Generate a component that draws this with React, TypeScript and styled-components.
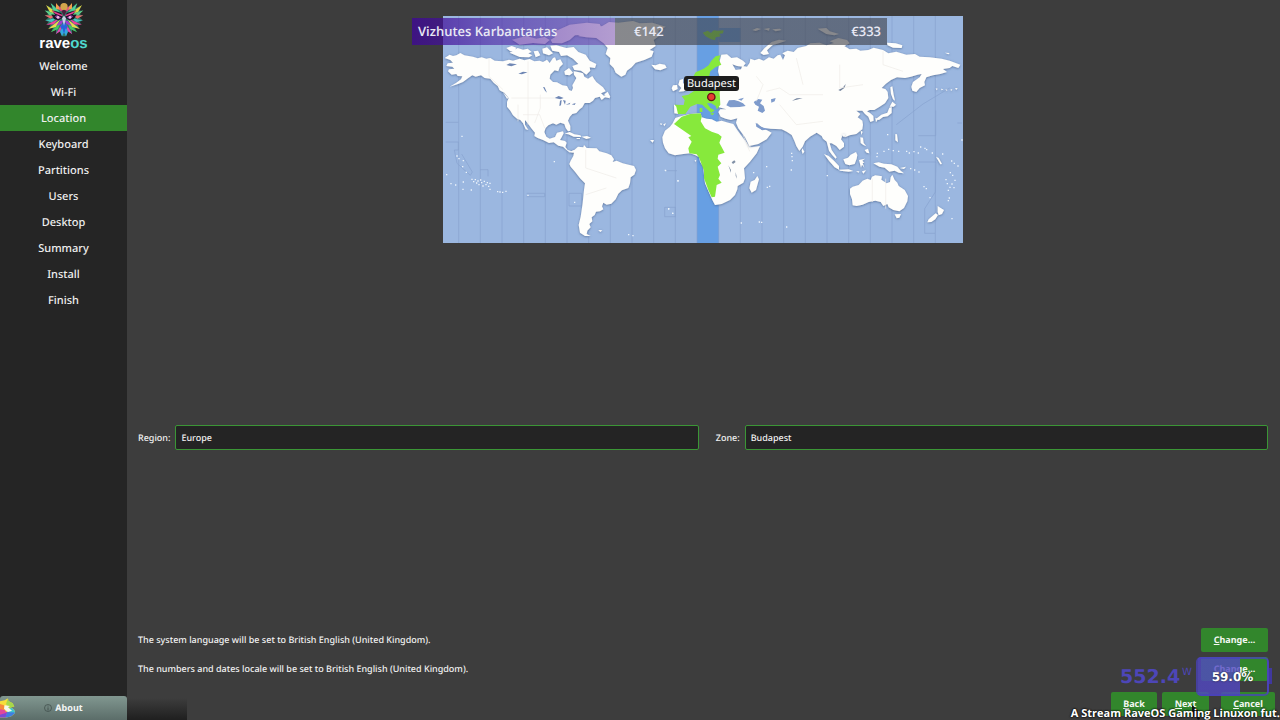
import React, { useState } from "react";
import styled, { createGlobalStyle } from "styled-components";

const GlobalStyle = createGlobalStyle`
  *, *::before, *::after { box-sizing: border-box; }
  body {
    margin: 0;
    background: #3d3d3d;
    color: #f2f2f2;
    font-family: "Noto Sans", "Open Sans", sans-serif;
    font-weight: 500;
    text-rendering: geometricPrecision;
  }
`;

const Page = styled.div`
  position: relative;
  display: grid;
  grid-template-columns: 127px minmax(0, 1fr);
  min-height: 100vh;
  overflow: hidden;
`;

const Sidebar = styled.aside`
  display: flex;
  flex-direction: column;
  background: #252525;
`;

const Brand = styled.div`
  display: flex;
  flex-direction: column;
  align-items: center;
  height: 53px;
  padding-top: 1px;
  font: bold 15px/14px "Liberation Sans", sans-serif;
  color: #ffffff;
`;

const BrandAccent = styled.span`
  color: #4fd8cf;
`;

const Steps = styled.nav`
  display: flex;
  flex-direction: column;
  flex: 1;
`;

const Step = styled.a<{ $active?: boolean }>`
  height: 26px;
  font-size: 11px;
  line-height: 28px;
  text-align: center;
  text-decoration: none;
  color: #f0f0f0;
  background: ${(p) => (p.$active ? "#32862c" : "transparent")};
`;

const AboutButton = styled.button`
  position: relative;
  display: flex;
  align-items: center;
  justify-content: center;
  gap: 3px;
  height: 24px;
  padding: 0;
  border: 0;
  border-radius: 3px 3px 0 0;
  background: linear-gradient(#819790, #5b6d69);
  color: #f2f5f4;
  font: bold 9px/24px "Noto Sans", sans-serif;
  text-rendering: inherit;
`;

const Launcher = styled.svg`
  position: absolute;
  left: 0;
  top: 2px;
`;

const Main = styled.main`
  display: flex;
  flex-direction: column;
  padding: 16px 12px 4px 11px;
`;

const MapArea = styled.section`
  flex: 1 1 409px;
  display: flex;
  justify-content: center;
  align-items: flex-start;
`;

const MapFrame = styled.div`
  position: relative;
  width: 520px;
  height: 227px;
`;

const MapDrawing = styled.svg`
  display: block;
  width: 100%;
  height: 100%;
`;

const CityLabel = styled.span`
  position: absolute;
  left: 241px;
  top: 60px;
  width: 55px;
  height: 15px;
  border-radius: 3px;
  background: #1d1d1d;
  color: #ffffff;
  font: 11px/16px "Noto Sans", sans-serif;
  text-align: center;
`;

const DonationBar = styled.div`
  position: absolute;
  left: -31px;
  top: 2px;
  display: grid;
  grid-template-columns: 216px 1fr auto;
  width: 475px;
  height: 27px;
  padding: 0 6px;
  background:
    linear-gradient(90deg, rgba(62, 8, 150, 0.78), rgba(74, 30, 160, 0.6) 40%, rgba(105, 60, 165, 0.5)) 0 0 / 203px 100% no-repeat,
    linear-gradient(rgba(62, 64, 72, 0.62), rgba(62, 64, 72, 0.62)) 203px 0 / 272px 100% no-repeat;
  color: #e8e8f4;
  font: 600 13px/27px "Open Sans", sans-serif;
`;

const Fields = styled.form`
  display: flex;
  gap: 17px;
`;

const Field = styled.div`
  display: flex;
  flex: 1 1 auto;
  align-items: center;
  gap: 5px;
`;

const FieldLabel = styled.label`
  font-size: 9px;
  line-height: 24px;
`;

const Picker = styled.select`
  flex: 1 1 0;
  width: 0;
  min-width: 0;
  height: 25px;
  padding: 0 5px;
  appearance: none;
  border: 1px solid #3b9636;
  border-radius: 2px;
  background: #242424;
  color: #f2f2f2;
  font: 500 9px "Noto Sans", sans-serif;
  text-rendering: inherit;
`;

const Spacer = styled.div`
  flex: 1 1 178px;
`;

const LocaleRows = styled.div`
  display: flex;
  flex-direction: column;
  gap: 5px;
`;

const LocaleRow = styled.div`
  display: flex;
  align-items: center;
  justify-content: space-between;
  height: 24px;
  font-size: 9px;
  line-height: 24px;
`;

const ActionButton = styled.button<{ $width: number }>`
  width: ${(p) => p.$width}px;
  height: 24px;
  padding: 0;
  border: 0;
  border-radius: 2px;
  background: #32862c;
  color: #f4f8f3;
  font: bold 9px/24px "Noto Sans", sans-serif;
  text-rendering: inherit;
`;

const Actions = styled.div`
  display: flex;
  justify-content: flex-end;
  gap: 5px;
  margin: 11px -7px 0 0;
`;

const CancelSlot = styled.div`
  display: flex;
  margin-left: 7px;
`;

const PowerOverlay = styled.div`
  position: absolute;
  right: 8px;
  bottom: 24px;
  display: flex;
  align-items: center;
  gap: 4px;
`;

const Watts = styled.div`
  display: flex;
  align-items: flex-start;
  color: #4d46b8;
  font: bold 19px/24px "DejaVu Sans", sans-serif;
`;

const Unit = styled.sup`
  margin-left: 2px;
  vertical-align: baseline;
  font: 10px/16px "DejaVu Sans", sans-serif;
`;

const Battery = styled.div`
  position: relative;
  width: 73px;
  height: 39px;
  margin-right: 3px;
  border: 2px solid rgba(74, 66, 190, 0.75);
  border-radius: 5px;
  background: linear-gradient(90deg, rgba(82, 72, 196, 0.8) 42px, transparent 42px);
  color: #ffffff;
  font: bold 12px/37px "DejaVu Sans", sans-serif;
  text-align: center;
  text-shadow: 0 0 2px #222;

  &::after {
    content: "";
    position: absolute;
    right: -5px;
    top: 9px;
    width: 3px;
    height: 16px;
    background: #40389e;
  }
`;

const Ticker = styled.div`
  position: absolute;
  right: 0;
  bottom: -1px;
  color: #ffffff;
  font: bold 11px/14px "Open Sans", sans-serif;
  text-shadow: 0 0 2px #000, 0 0 2px #000;
  white-space: nowrap;
`;

const Shade = styled.div`
  position: absolute;
  left: 127px;
  bottom: 0;
  width: 60px;
  height: 22px;
  background: linear-gradient(rgba(30, 30, 30, 0), #1f1f1f);
`;

const Pointer = styled.svg`
  position: absolute;
  right: 75px;
  bottom: 0;
`;

const steps = ["Welcome", "Wi-Fi", "Location", "Keyboard", "Partitions", "Users", "Desktop", "Summary", "Install", "Finish"];

function OwlHalf() {
  return (
    <g>
      <path d="M60 28 36 8 38 20 22 8 28 22 8 14 18 28 4 30 16 38 3 44 16 48 4 58 18 58 8 70 22 68 14 82 28 78 22 92 36 86 36 98 48 90 54 106 60 106Z" fill="#2f7a6a" />
      <path d="M54 28 36 6 36 24Z" fill="#f4a04a" />
      <path d="M48 34 20 6 28 28Z" fill="#4fd09a" />
      <path d="M46 40 6 12 18 34Z" fill="#e0d848" />
      <path d="M36 40 2 28 18 44Z" fill="#5fd08a" />
      <path d="M32 44 2 43 20 53Z" fill="#ef6a6a" />
      <path d="M38 50 3 59 24 63Z" fill="#44c8c0" />
      <path d="M44 53 6 72 30 70Z" fill="#ea3f9c" />
      <path d="M48 56 12 84 36 78Z" fill="#e9dc4e" />
      <path d="M52 60 20 94 42 84Z" fill="#49c860" />
      <path d="M54 68 35 100 50 90Z" fill="#e246b4" />
      <path d="M56 76 48 92 54 106 60 94Z" fill="#34a8e0" />
      <path d="M54 22 44 16 48 28 58 36Z" fill="#e7428a" />
      <path d="M52 36 24 28 34 42 22 40 30 54 44 58 56 50Z" fill="#1d1224" />
      <path d="M56 42 22 28 34 38 54 46Z" fill="#e5418f" />
      <path d="M32 46 40 42 52 50 42 55Z" fill="#7a3c9c" />
      <circle cx="42" cy="49" r="4" fill="#f0b8dc" />
      <path d="M60 58 48 60 36 74 52 70Z" fill="#a23dcc" />
      <path d="M60 62 48 78 56 84 60 100Z" fill="#2a62dc" />
    </g>
  );
}

function OwlLogo() {
  return (
    <svg width="40" height="36" viewBox="0 0 120 108" aria-hidden="true">
      <OwlHalf />
      <g transform="translate(120 0) scale(-1 1)"><OwlHalf /></g>
      <circle cx="60" cy="17" r="11" fill="#d2a54c" />
      <path d="M52 30 60 46 68 30 60 26Z" fill="#46203c" />
      <path d="M54 52 60 44 66 52 60 74Z" fill="#c9cfe6" />
    </svg>
  );
}

const specks = (points: number[][]) => points.map(([x, y]) => `M${x} ${y}h4v4h-4z`).join("");

const pacificWest = specks([[49, 106], [55, 114], [68, 120], [66, 138], [77, 155], [64, 47], [18, 162], [31, 189], [45, 193], [68, 184], [67, 206], [92, 208], [94, 176], [99, 183], [104, 177], [108, 187], [112, 181], [115, 192], [120, 178], [123, 186], [127, 196], [131, 182], [136, 192], [140, 186], [144, 197], [148, 206], [148, 188], [171, 213], [178, 214], [186, 215], [196, 212], [262, 224], [341, 123], [402, 245], [675, 150], [712, 181], [684, 265], [696, 278], [564, 342], [577, 345]]);
const pacificEast = specks([[351, 102], [320, 158], [319, 168], [340, 152], [354, 146], [368, 150], [384, 152], [408, 152], [416, 157], [430, 153], [443, 157], [450, 139], [463, 143], [468, 147], [485, 157], [516, 160], [543, 181], [551, 188], [562, 196], [420, 204], [432, 208], [445, 214], [460, 258], [467, 264], [478, 291], [539, 216], [546, 224], [553, 239], [530, 249], [544, 250], [538, 260], [550, 261], [533, 269], [526, 237], [536, 292], [533, 300], [544, 354], [574, 118], [170, 225], [48, 379], [63, 158], [64, 168], [65, 180], [62, 208]]);
const zoneLines = Array.from({ length: 23 }, (_, i) => `M${167 + i * 65} 24V705`).join("");

const Lakes = () => (
  <g fill="#6f87b4">
    <path d="M455 270 467 264 482 270 472 274ZM471 278l5-2-2 16-5 2zM480 276l8 2-2 12zM488 290l14-6-2 5zM506 289l12-4-3 6z" />
    <path d="M310 171 320 166 342 169 325 175ZM346 197 360 191 374 193 357 199ZM420 237l5 1 7 16-6-6z" />
  </g>
);

function WorldMap() {
  return (
    <MapDrawing viewBox="120 24 1560 681" preserveAspectRatio="none" role="img" aria-label="Time zone map">
      <defs>
        <filter id="coast" x="-5%" y="-5%" width="110%" height="110%">
          <feDropShadow dx="0" dy="2" stdDeviation="3" floodColor="#4d6791" floodOpacity="0.85" />
        </filter>
      </defs>
      <path d="M120 24H1680V705H120Z" fill="#9bb7e0" />
      <path d="M882 24h66v681h-66z" fill="#679fe3" />
      <path d="M948 60h66v42h-66z" fill="#679fe3" />
      <g fill="none" stroke="#86a2cf" strokeWidth="2">
        <path d={zoneLines} />
        <path d="M128 343h38M128 402h38v24h-12l8 40 40 36 6-10-32-54M371 556h54v10h-54M498 556h38v38h-38zM785 488h37M785 598h32v28h-32zM231 485h24v20M1546 383h52v-75M1545 462h54l-2 90-32 50v74h31M1663 345h14M1480 350l80-62 80-48" />
      </g>

      <g fill="#fefefc" filter="url(#coast)">
        <path d="M125 150 140 140 150 144 160 142 172 135 184 142 210 146 224 151 236 148 250 152 262 150 275 158 300 160 318 155 330 158 350 152 364 157 380 153 394 160 410 158 420 162 432 155 440 165 450 150 456 148 460 158 472 154 480 168 470 178 466 190 455 187 442 200 440 212 450 222 462 223 478 232 492 234 498 246 506 249 510 240 508 232 515 220 520 210 513 200 512 190 525 192 540 196 544 206 555 212 568 204 574 214 580 222 600 238 608 250 594 256 602 263 618 260 621 271 606 268 596 276 590 266 576 270 570 278 560 285 545 285 538 298 530 304 520 315 508 318 500 327 495 338 502 354 502 368 495 370 488 360 484 348 472 344 460 350 450 346 436 352 428 360 424 372 430 386 440 392 456 387 462 374 480 370 482 376 476 388 471 396 486 399 491 404 487 417 494 426 506 430 512 426 517 431 508 434 499 433 490 425 480 416 466 413 452 403 438 405 420 396 404 390 394 384 396 374 386 362 374 346 366 336 366 350 376 366 368 364 360 346 352 336 342 332 330 322 322 308 312 296 312 282 317 270 304 254 292 248 284 234 272 224 262 212 245 210 234 202 218 206 208 202 196 210 180 222 165 228 140 236 160 224 174 214 178 205 164 204 160 198 146 200 135 190 138 184 154 182 148 176 130 174 134 166 150 164 142 156Z" />
        <path d="M310 120 326 114 340 119 334 128 322 130ZM320 134 344 120 360 125 374 122 386 132 376 136 388 142 378 148 350 147ZM392 130 405 128 412 142 398 148ZM418 122 432 118 440 126 450 136 438 142 420 136ZM442 113 460 112 490 120 512 117 526 132 548 140 560 158 580 168 576 180 560 178 562 188 550 200 534 188 514 186 508 174 526 168 510 152 492 142 474 144 468 132 448 128ZM484 190 498 180 510 194 500 202 486 200ZM327 95 370 84 400 92 425 87 440 96 426 108 390 105 350 110ZM443 95 456 88 460 68 500 50 552 44 590 48 594 56 566 64 548 80 516 82 500 96 477 106 448 105Z" />
        <path d="M525 84 550 88 580 90 602 106 614 120 608 138 622 150 620 168 632 180 638 194 655 206 667 200 672 188 686 178 698 164 724 156 746 146 752 130 740 126 758 114 752 96 768 84 766 68 788 56 748 44 710 46 690 39 646 44 618 42 598 54 570 60 548 72ZM745 170 758 172 770 167 786 170 791 179 772 187 756 184Z" />
        <path d="M485 377 500 372 514 379 532 382 535 387 512 386 496 379ZM536 386 552 384 564 389 550 393ZM521 390h10v3h-10zM604 259l10-8 8 16-12-1zM286 238l8 8-4 1zM300 252l16 18-4 2z" />
      </g>

      <g transform="translate(111 336)">
        <path filter="url(#coast)" fill="#fefefc" d="M390 95 403 90 414 80 430 82 432 75 440 84 470 85 478 94 500 100 514 106 522 118 518 126 530 122 548 130 566 134 582 138 588 150 583 164 572 172 570 190 565 204 546 211 535 221 527 238 514 251 500 254 490 248 486 259 490 268 480 274 468 275 464 285 455 292 457 304 448 312 452 322 442 332 440 342 452 348 435 348 420 338 416 315 422 290 428 250 432 210 435 190 420 175 405 155 392 140 388 132 392 122 400 108 402 98ZM475 330l12 1-6 5z" />
        <path d={pacificWest} fill="#eef5fc" />
      </g>

      <g transform="translate(741 276)">
        <g fill="#fefefc" filter="url(#coast)">
          <path d="M76 54 68 70 60 80 45 92 37 112 39 128 45 145 56 160 75 166 100 162 120 160 135 165 148 172 150 185 160 200 162 225 165 250 178 280 187 300 195 315 215 312 240 300 255 285 262 268 263 258 280 248 285 235 282 205 300 185 320 160 330 138 305 141 297 135 280 115 262 90 250 72 235 68 215 62 200 65 185 58 170 56 155 52 152 40 120 42 95 48Z" />
          <path d="M322 228 327 238 318 270 305 278 298 265 302 245 314 240ZM30 70l7 1-4 5zM40 73l8-3-5 9zM0 120l12 0-4 8zM134 180l5 1-3 5z" />
        </g>
        <path d="M72 72 95 50 120 42 152 40 155 50 152 64 165 85 185 95 205 102 215 110 208 128 224 158 205 164 203 176 214 190 203 200 210 225 205 236 215 248 200 255 195 290 185 292 175 270 162 235 162 212 148 175 140 163 118 160 115 145 125 125 115 112 124 108Z" fill="#87e93c" />
        <path d="M245 187l8-6 4 5-8 6zM235 196l8 14 0 8zM257 216l4 20-4-8z" fill="#8190a5" />
        <path d={specks([[44, 209], [82, 240], [54, 324], [66, 338], [348, 198], [309, 216], [357, 257], [350, 260], [272, 367], [326, 364], [333, 365]])} fill="#eef5fc" />
      </g>

      <g transform="translate(780 0)">
        <g fill="#fefefc" filter="url(#coast)">
          <path d="M175 140 192 139 205 150 222 148 240 158 248 166 240 176 222 174 208 169 218 186 234 184 238 174 252 176 260 164 262 152 275 157 288 152 302 158 318 148 332 152 344 142 352 140 360 156 366 142 358 136 374 128 392 132 404 120 430 114 442 106 470 104 490 112 516 104 540 112 560 124 580 122 592 128 616 126 632 119 660 126 676 136 700 131 730 140 756 138 770 146 800 148 836 152 860 158 892 170 886 180 868 174 860 180 840 183 852 192 832 198 810 202 790 208 784 222 786 232 770 240 760 252 748 248 745 236 750 222 770 208 776 198 764 200 744 206 726 210 702 208 684 216 668 228 656 240 668 244 674 252 676 270 666 286 650 296 634 306 620 306 612 310 622 316 631 324 632 338 622 342 616 326 606 318 598 308 580 308 592 318 584 328 598 338 600 350 598 364 580 378 560 382 546 388 538 384 534 394 543 406 543 416 530 426 520 414 506 406 500 406 506 426 521 448 518 452 508 442 498 428 491 401 480 392 476 384 461 374 441 386 426 400 419 416 409 429 400 414 394 398 386 381 371 371 356 364 321 362 306 362 291 354 281 344 284 352 296 366 306 364 326 374 311 394 286 408 259 414 246 388 226 361 219 344 223 331 204 336 188 332 173 326 166 312 172 304 190 304 168 298 160 280 165 245 175 225 165 190 170 160Z" />
          <path d="M50 216 60 213 60 224 68 236 73 246 62 250 47 251 55 240 46 230ZM30 232 42 231 44 243 30 250 26 241ZM33 290 43 292 46 318 34 316ZM292 135 305 120 326 102 348 95 370 98 352 104 328 112 312 127 318 138 302 141ZM268 66 282 60 294 63 278 69ZM302 63 320 60 318 68ZM328 64 350 62 356 66 338 70ZM464 62 490 60 500 70 528 78 514 82 490 78ZM500 100 526 90 552 96 560 106 540 116ZM672 104 698 106 718 112 716 120 690 119 674 112ZM846 134 860 135 856 139ZM682 238 688 235 692 260 696 278 690 274 684 258ZM688 281 699 290 692 296 680 296ZM686 297 686 315 674 325 660 327 648 336 638 334 655 320 673 314 679 299ZM637 329l8 4-6 10z" />
          <path d="M818 241l6 1-3 5zM834 242l7 2-5 3zM848 244l6 2-5 2zM862 245l6-2-3 6zM876 241l8-1-4 6z" />
        </g>
        <g fill="#87e93c">
          <path d="M172 142 158 145 145 158 137 172 122 182 98 193 90 207 98 217 112 214 126 216 138 206 142 190 157 178 175 170 168 156Z" />
          <path d="M165 215 180 236 170 252 172 290 162 304 158 294 145 286 132 286 142 300 155 307 145 315 128 300 118 290 102 288 82 296 77 304 67 318 45 318 40 296 35 290 62 291 65 277 56 264 76 260 92 250 105 230 140 232Z" />
          <path d="M119 74 134 68 144 75 152 67 164 68 182 67 180 76 168 78 174 85 158 88 156 97 144 94 128 85ZM140 317l14-3-5 8zM110 300h8v12h-8z" />
        </g>
        <path d="M142 210 153 190 166 190 160 202 168 214 157 220Z" fill="#679fe3" />
        <g fill="#7e9bcc">
          <path d="M190 292 198 277 214 276 227 280 240 286 248 294 230 297 202 298ZM225 274l18-5-8 9zM272 282 286 273 298 275 291 286 302 294 306 308 298 315 284 308 288 296 277 290ZM324 274l14-4-3 10-10 4zM278 344l18 14 26 5-24 4-18-11z" />
          <path d="M526 246 539 239 548 228 545 239 532 249ZM387 278l14-7 18-1-18 5z" fill="#77869f" />
        </g>
      </g>

      <g transform="translate(1101 276)">
        <g fill="#fefefc" filter="url(#coast)">
          <path d="M240 266 248 260 266 255 278 242 292 236 302 240 306 230 316 226 336 229 334 239 350 250 360 246 362 232 367 224 374 240 382 248 386 258 404 270 414 288 412 304 402 324 388 334 370 330 356 322 352 312 340 318 332 306 316 302 296 306 278 314 260 318 248 316 246 298 240 282ZM374 343 393 342 388 353 380 355ZM503 318 512 324 522 330 516 342 506 346 503 336ZM497 340 504 345 496 358 484 366 472 367 476 358Z" />
          <path d="M162 162 176 168 192 182 207 198 207 209 194 202 178 184ZM207 209 236 208 250 213 236 215 210 212ZM220 178 234 173 242 164 258 156 262 165 260 176 254 192 238 196 226 192ZM267 180l18-4-8 6 6 6-5 1 5 14-7-9-3 9-3-12zM271 112l8 1 2 16 8 10-9-4-8-6zM284 150l10-4 4 14-8-2zM272 92l6 3-4 10zM97 145l6 10-5 7-3-10zM217 102l9 2-5 6zM310 190 326 187 342 191 364 193 382 200 392 212 402 220 386 218 374 212 358 215 344 203 328 200ZM390 204l18-4-6 7zM258 214l10 0-2 4zM276 214l12-3-8 10zM376 102l5 1 3 24-8-6zM498 170l8 4 10 18-5 1z" />
        </g>
        <path d={pacificEast} fill="#eef5fc" />
      </g>

      <Lakes />
      <g fill="none" stroke="#efece7" strokeWidth="2">
        <path d="M258 150V205L300 245M325 270H455M375 160V350M345 290V340M360 320H410L425 360M412 260V300L395 345M548 425V480L640 510M548 560 610 540M1060 205 1080 230 1060 280M1090 250 1130 240 1160 260 1260 260M1310 170V240L1380 230M1440 130V170L1500 190M1180 150 1200 230M1130 290 1180 350 1260 340M1408 512v70M1448 512v90M1020 380 1040 430" />
      </g>
      <circle cx="925" cy="267" r="11" fill="#e83d32" stroke="#661015" strokeWidth="4" />
    </MapDrawing>
  );
}

export default function App() {
  const [region, setRegion] = useState("Europe");
  const [zone, setZone] = useState("Budapest");
  return (
    <>
      <GlobalStyle />
      <Page>
        <Sidebar>
          <Brand>
            <OwlLogo />
            <div>rave<BrandAccent>os</BrandAccent></div>
          </Brand>
          <Steps aria-label="Installation steps">
            {steps.map((name) => (
              <Step key={name} href="#" $active={name === "Location"} aria-current={name === "Location" ? "step" : undefined}>{name}</Step>
            ))}
          </Steps>
          <AboutButton type="button">
            <Launcher width="16" height="20" viewBox="0 0 48 60" aria-hidden="true">
              <defs>
                <clipPath id="launcher-shape">
                  <path d="M0 10 14 7 24 1 25 9 38 16 43 26 32 27 43 36 45 46 34 55 18 59 0 59Z" />
                </clipPath>
              </defs>
              <g clipPath="url(#launcher-shape)">
                <path d="M0 0H48V60H0Z" fill="#f6dd3b" />
                <path d="M24 0H48V30H26L18 18Z" fill="#a6d84a" />
                <path d="M18 34 48 26V46L24 44Z" fill="#3fc6cf" />
                <path d="M22 42 48 44V60H14Z" fill="#3f7fe0" />
                <path d="M0 40 22 42 16 60H0Z" fill="#7c4ad4" />
                <path d="M0 30 14 36 20 44 0 50Z" fill="#e0489c" />
                <path d="M0 18 12 22 14 36 0 34Z" fill="#f58a3b" />
                <path d="M14 22 30 24 24 28 36 38 24 42 12 32Z" fill="#f4f7ee" />
              </g>
            </Launcher>
            <svg width="8" height="8" viewBox="0 0 8 8" aria-hidden="true">
              <circle cx="4" cy="4" r="3.5" fill="none" stroke="#3d4a47" strokeWidth=".7" />
              <path d="M4 1.7v.8M4 3.4v3" stroke="#3d4a47" strokeWidth=".8" />
            </svg>
            About
          </AboutButton>
        </Sidebar>

        <Main>
          <MapArea>
            <MapFrame>
              <WorldMap />
              <CityLabel>Budapest</CityLabel>
              <DonationBar>
                <span>Vizhutes Karbantartas</span>
                <span>€142</span>
                <span>€333</span>
              </DonationBar>
            </MapFrame>
          </MapArea>

          <Fields>
            <Field>
              <FieldLabel htmlFor="region">Region:</FieldLabel>
              <Picker id="region" value={region} onChange={(e) => setRegion(e.target.value)}>
                <option>Europe</option>
              </Picker>
            </Field>
            <Field>
              <FieldLabel htmlFor="zone">Zone:</FieldLabel>
              <Picker id="zone" value={zone} onChange={(e) => setZone(e.target.value)}>
                <option>Budapest</option>
              </Picker>
            </Field>
          </Fields>

          <Spacer />

          <LocaleRows>
            <LocaleRow>
              <span>The system language will be set to British English (United Kingdom).</span>
              <ActionButton type="button" $width={67}><u>C</u>hange...</ActionButton>
            </LocaleRow>
            <LocaleRow>
              <span>The numbers and dates locale will be set to British English (United Kingdom).</span>
              <ActionButton type="button" $width={67}>Change...</ActionButton>
            </LocaleRow>
          </LocaleRows>

          <Actions>
            <ActionButton type="button" $width={46}><u>B</u>ack</ActionButton>
            <ActionButton type="button" $width={47}><u>N</u>ext</ActionButton>
            <CancelSlot>
              <ActionButton type="button" $width={54}><u>C</u>ancel</ActionButton>
            </CancelSlot>
          </Actions>
        </Main>

        <Shade />
        <PowerOverlay>
          <Watts>552.4<Unit>W</Unit></Watts>
          <Battery>59.0%</Battery>
        </PowerOverlay>
        <Pointer width="15" height="16" viewBox="0 0 15 16" aria-hidden="true">
          <path d="M2 1v13l3-3 3 5 2-1-2-5h4Z" fill="#151515" />
        </Pointer>
        <Ticker>A Stream RaveOS Gaming Linuxon fut.</Ticker>
      </Page>
    </>
  );
}
